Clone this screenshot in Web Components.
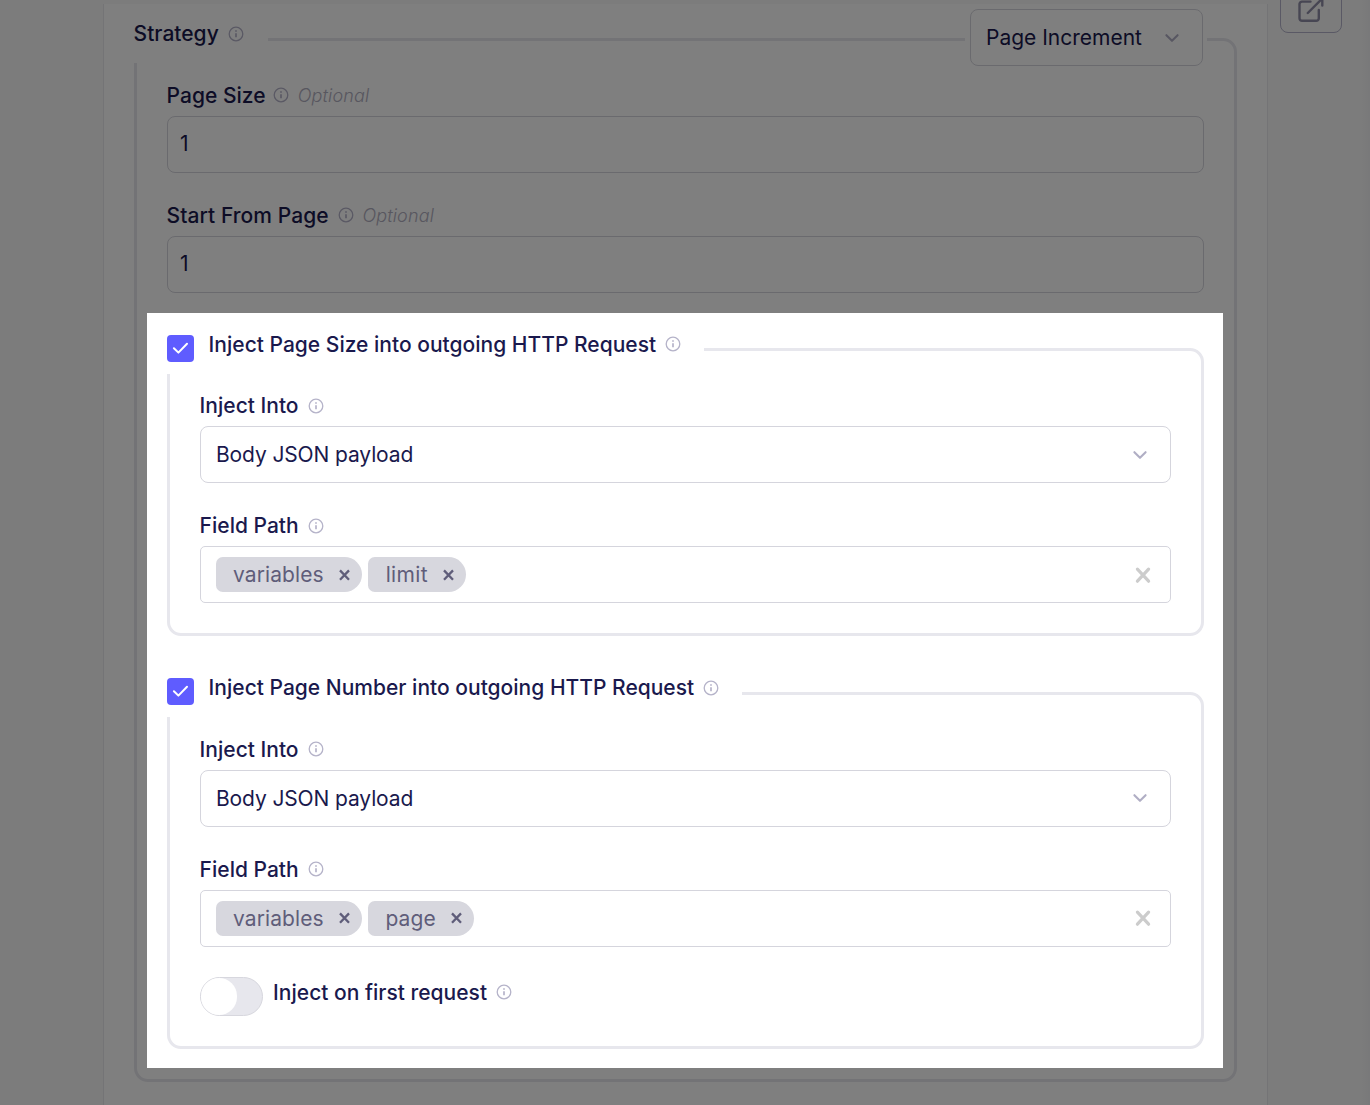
<!DOCTYPE html>
<html lang="en">
<head>
<meta charset="utf-8">
<title>Pagination</title>
<style>
  html, body { margin: 0; height: 1105px; overflow: hidden; background: #f8f8f8; }
  body { font-family: Inter, "Liberation Sans", sans-serif; font-size: 21px; color: #1a194d; }
</style>
</head>
<body>
<builder-page>
  <field-group kind="strategy" label="Strategy">
    <select-box slot="action" compact>Page Increment</select-box>
    <form-field label="Page Size" optional style="--icon-gap:7.4px"><text-input>1</text-input></form-field>
    <form-field label="Start From Page" optional style="--label-spacing:.06px"><text-input>1</text-input></form-field>
    <spot-light>
      <field-group kind="check" label="Inject Page Size into outgoing HTTP Request" style="--title-icon:-1px">
        <form-field label="Inject Into"><select-box>Body JSON payload</select-box></form-field>
        <form-field label="Field Path"><tag-box><path-tag>variables</path-tag><path-tag style="--tracking:.35px;--inset:17.900px">limit</path-tag></tag-box></form-field>
      </field-group>
      <field-group kind="check" raised label="Inject Page Number into outgoing HTTP Request">
        <form-field label="Inject Into"><select-box>Body JSON payload</select-box></form-field>
        <form-field label="Field Path"><tag-box><path-tag>variables</path-tag><path-tag style="--tracking:.1px;--inset:17.6px">page</path-tag></tag-box></form-field>
        <toggle-switch label="Inject on first request"></toggle-switch>
      </field-group>
    </spot-light>
  </field-group>
</builder-page>
<script>
const define = (name, html) => customElements.define(name, class extends HTMLElement {
  constructor() {
    super();
    const label = this.getAttribute('label') || '';
    this.attachShadow({ mode: 'open' }).innerHTML =
      '<style>:host{display:block;box-sizing:border-box}*{box-sizing:border-box}</style>' +
      html.replace('{label}', label);
  }
});

define('info-icon', `
<style>:host{flex:none;width:16px;height:16px}svg{display:block}</style>
<svg width="16" height="16" viewBox="0 0 16 16" fill="none" stroke="#b5b3c9">
  <circle cx="8" cy="8" r="6.8" stroke-width="1.3"/>
  <path d="M8 7.2v4" stroke-width="1.7"/><path d="M8 4.3v1.5" stroke-width="1.7"/>
</svg>`);

define('field-label', `
<style>
  :host{display:flex;align-items:center;font-weight:500;letter-spacing:var(--label-spacing,.01px);white-space:nowrap;line-height:28px}
  span{margin-left:-.4px}
  info-icon{margin-left:var(--icon-gap,9px);transform:translateY(var(--icon-shift,0px))}
</style>
<span>{label}</span><info-icon></info-icon><slot></slot>`);

define('form-field', `
<style>
  :host{margin-bottom:28px}
  :host([optional]){--icon-shift:-1px}
  field-label{height:30px;margin-bottom:5px}
  i{display:none;margin-left:8.800px;font-weight:300;font-size:18px;letter-spacing:.15px;color:#b0aec0}
  :host([optional]) i{display:block}
</style>
<field-label label="{label}"><i>Optional</i></field-label><slot></slot>`);

define('text-input', `
<style>:host{height:57px;border:1px solid #d5d5dd;border-radius:8px;padding:0 12px;line-height:54px;background:#fff}</style><slot></slot>`);

define('select-box', `
<style>
  :host{display:flex;align-items:center;justify-content:space-between;height:57px;border:1px solid #d5d5dd;border-radius:8px;padding:0 22px 0 15px;line-height:28px;background:#fff;letter-spacing:-.12px;white-space:nowrap}
  :host([compact]){width:233px;letter-spacing:0}
  svg{flex:none;transform:translateY(var(--icon-shift,0px))}
</style>
<span><slot></slot></span>
<svg width="16" height="12" viewBox="0 0 16 12" fill="none" stroke="#b0aec4" stroke-width="2.1" stroke-linecap="round" stroke-linejoin="round"><path d="M2.4 3.2 8 8.8l5.6-5.6"/></svg>`);

define('path-tag', `
<style>
  :host{display:flex;align-items:center;height:35px;padding:0 12px 0 var(--inset,17px);border-radius:7px 18px 18px 7px;background:#d7d7de;color:#5f5d7a;line-height:28px;letter-spacing:var(--tracking,.1px)}
  svg{margin-left:15px;transform:translateY(var(--icon-shift,0px))}
</style>
<slot></slot><svg width="11" height="12" viewBox="0 0 11 12" fill="none" stroke="#5f5d7a" stroke-width="2.3"><path d="M1 1.4 10 10.8M10 1.4 1 10.8"/></svg>`);

define('tag-box', `
<style>
  :host{display:flex;align-items:center;gap:6px;height:57px;border:1px solid #d5d5dd;border-radius:5px;padding:0 19px 0 15px}
  svg{margin-left:auto;transform:translateY(var(--icon-shift,0px))}
</style>
<slot></slot><svg width="16" height="18" viewBox="0 0 16 18" fill="none" stroke="#ccc" stroke-width="3.2" stroke-linecap="round"><path d="M2.4 3.2l11.2 12M13.6 3.2l-11.2 12"/></svg>`);

define('toggle-switch', `
<style>
  :host{display:flex;height:39px;--icon-gap:8.600px}
  .track{width:63px;height:39px;border:1px solid #d7d7de;border-radius:20px;background:#e7e7ed;margin-right:10.500px}
  .knob{width:36px;height:37px;border-radius:18.5px;background:#fff}
  field-label{height:32px}
</style>
<div class="track"><div class="knob"></div></div><field-label label="{label}"></field-label>`);

define('check-box', `
<style>:host{flex:none;width:27px;height:27px;border-radius:4px;background:#5f5cff}svg{display:block}</style>
<svg width="27" height="27" viewBox="0 0 27 27" fill="none" stroke="#fff" stroke-width="2" stroke-linecap="round" stroke-linejoin="round"><path d="M6.9 13.2l4.5 4.4 8.600-8.800"/></svg>`);

define('field-group', `
<style>
  :host{border:3px solid #e7e7ed;border-radius:14px}
  :host([raised]){--icon-shift:-1px;--title-icon:0px}
  header{display:flex;justify-content:space-between;align-items:flex-start;margin-left:-3px}
  .title{display:flex;background:#fff;padding-right:23px}
  .title field-label{--icon-shift:var(--title-icon,0px)}
  field-label{height:28px}
  .body{display:flex;flex-direction:column}
  :host([kind=strategy]) header{margin-top:-32px;margin-right:27px;margin-bottom:15px}
  :host([kind=strategy]) .title{height:54px;padding-top:11px;padding-right:24.600px}
  :host([kind=strategy]) check-box{display:none}
  :host([kind=strategy]) .action{background:#fff;padding:0 4px 0 5px}
  :host([kind=strategy]) .body{padding:0 11px 11px 10px}
  :host([kind=strategy]) ::slotted(form-field){margin-left:20px;margin-right:19px}
  :host([kind=check]) header{margin-top:-20px;margin-bottom:17px}
  :host([kind=check][raised]) header{margin-top:-21px;margin-bottom:18px}
  :host([kind=check]) .title{height:43px}
  :host([kind=check]) check-box{margin:4px 15px 0 0}
  :host([kind=check]) .body{padding:0 30px}
  :host([kind=check]) ::slotted(form-field:last-child){margin-bottom:30px}
  :host([kind=check]) ::slotted(toggle-switch){margin-top:2px;margin-bottom:30px}
</style>
<header><div class="title"><check-box></check-box><field-label label="{label}"></field-label></div><div class="action"><slot name="action"></slot></div></header>
<div class="body"><slot></slot></div>`);

define('spot-light', `
<style>
  :host{display:flex;flex-direction:column;gap:56px;position:relative;z-index:2;margin-top:-8px;padding:35px 19px 19px 20px;background:#fff;box-shadow:0 0 0 2000px rgba(0,0,0,.5)}
</style><slot></slot>`);

define('open-button', `
<style>
  :host{display:flex;justify-content:flex-start;width:62px;height:57px;margin-top:-24px;padding-left:15px;border:1px solid #b4b3ca;border-radius:8px}
  svg{margin-top:17px}
</style>
<svg width="30" height="30" viewBox="0 0 30 30" fill="none" stroke="#8f8da6" stroke-width="2.4" stroke-linecap="round" stroke-linejoin="round"><path d="M14.500 7.600H6a2.500 2.500 0 0 0-2.500 2.500V24.300a2.500 2.500 0 0 0 2.500 2.500h14.300a2.500 2.500 0 0 0 2.500-2.500V16M11.800 19 26.300 4.500M18 4.500h8.300v7"/></svg>`);

define('builder-page', `
<style>
  :host{display:flex;justify-content:flex-start;align-items:flex-start;height:1105px;padding-left:103px;background:#f8f8f8;overflow:hidden}
  main{width:1165px;height:1101px;margin-top:4px;padding:34px 30px 0;border:solid #e9e9ec;border-width:0 1px;background:#fff}
  open-button{margin-left:12px}
  .edge{width:8px;height:1105px;margin-left:auto;background:linear-gradient(90deg,#f8f8f8,#f2f2f4)}
</style>
<main><slot></slot></main><open-button></open-button><div class="edge"></div>`);
</script>
</body>
</html>
